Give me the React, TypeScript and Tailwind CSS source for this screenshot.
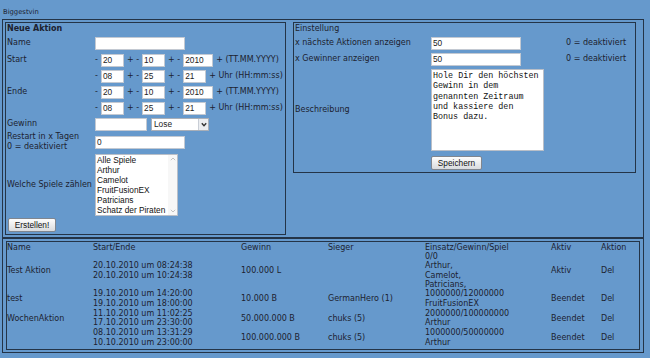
import React from "react";

const ARIAL = "font-['Liberation_Sans',Arial,sans-serif]";

function Inp({ cls, v }: { cls: string; v?: string }) {
  return (
    <div
      className={`${cls} h-[13px] shrink-0 bg-white border border-[#c3c9d2] ${ARIAL} text-[8.3px] leading-[11px] pl-[1px] text-[#222] overflow-hidden whitespace-nowrap`}
    >
      {v}
    </div>
  );
}

function Row({ label, children, cls = "" }: { label?: React.ReactNode; children?: React.ReactNode; cls?: string }) {
  return (
    <div className={`flex items-center h-4 ${cls}`}>
      <div className="w-[88px] shrink-0 whitespace-nowrap">{label}</div>
      {children}
    </div>
  );
}

function DateRow({ a, b, c, last, suffix }: { a: string; b: string; c: string; last: string; suffix: string }) {
  return (
    <div className="flex items-center gap-[3px] whitespace-pre">
      <span>-</span>
      <Inp cls="w-[23px]" v={a} />
      <span>+ -</span>
      <Inp cls="w-[23px]" v={b} />
      <span>+ -</span>
      <Inp cls={last} v={c} />
      <span>{suffix}</span>
    </div>
  );
}

function Btn({ cls, children }: { cls: string; children: React.ReactNode }) {
  return (
    <div
      className={`${cls} h-[14px] border border-[#80868f] rounded-[2px] bg-linear-to-b from-[#fdfdfd] to-[#d9dbde] ${ARIAL} text-[8.3px] leading-[12px] text-center text-[#111]`}
    >
      {children}
    </div>
  );
}

function LeftBox() {
  return (
    <div className="w-[281px] h-[213px] shrink-0 border border-[#243447] pl-[1px] pt-[1px]">
      <div className="font-bold">Neue Aktion</div>
      <Row label="Name" cls="mt-[1px]">
        <Inp cls="w-[90px]" />
      </Row>
      <Row label="Start" cls="mt-[1px]">
        <DateRow a="20" b="10" c="2010" last="w-[30px]" suffix="+ (TT.MM.YYYY)" />
      </Row>
      <Row>
        <DateRow a="08" b="25" c="21" last="w-[23px]" suffix="+ Uhr (HH:mm:ss)" />
      </Row>
      <Row label="Ende">
        <DateRow a="20" b="10" c="2010" last="w-[30px]" suffix="+ (TT.MM.YYYY)" />
      </Row>
      <Row>
        <DateRow a="08" b="25" c="21" last="w-[23px]" suffix="+ Uhr (HH:mm:ss)" />
      </Row>
      <Row label="Gewinn">
        <Inp cls="w-[52px]" />
        <div className={`ml-[4px] w-[58px] h-[13px] bg-white border border-[#a9afb8] flex ${ARIAL} text-[8.3px] leading-[11px] text-[#222]`}>
          <div className="flex-1 pl-[2px]">Lose</div>
          <div className="w-[10px] h-full bg-[#eceef1] border-l border-[#c9ced6] flex items-center justify-center">
            <svg width="6" height="5" viewBox="0 0 6 5">
              <path d="M0.8 1.2 L3 3.6 L5.2 1.2" fill="none" stroke="#333" strokeWidth="1.4" />
            </svg>
          </div>
        </div>
      </Row>
      <div className="flex items-center h-[20px]">
        <div className="w-[88px] shrink-0 leading-[10px]">
          <div>Restart in x Tagen</div>
          <div>0 = deaktiviert</div>
        </div>
        <Inp cls="w-[90px]" v="0" />
      </div>
      <div className="flex items-center pt-[2px]">
        <div className="w-[88px] shrink-0 whitespace-nowrap">Welche Spiele zählen</div>
        <div className="w-[83px] h-[62px] bg-white border border-[#b9bfc8] flex">
          <div className={`flex-1 pl-[1px] ${ARIAL} text-[8.3px] leading-[10px] text-[#111] whitespace-nowrap overflow-hidden`}>
            <div>Alle Spiele</div>
            <div>Arthur</div>
            <div>Camelot</div>
            <div>FruitFusionEX</div>
            <div>Patricians</div>
            <div>Schatz der Piraten</div>
          </div>
          <div className="w-[9px] h-full bg-[#f7f7f7] flex flex-col justify-between items-center py-[2px]">
            <svg width="6" height="4" viewBox="0 0 6 4">
              <path d="M0.8 3.2 L3 1 L5.2 3.2" fill="none" stroke="#c2c2c2" strokeWidth="1" />
            </svg>
            <svg width="6" height="4" viewBox="0 0 6 4">
              <path d="M0.8 0.8 L3 3 L5.2 0.8" fill="none" stroke="#c2c2c2" strokeWidth="1" />
            </svg>
          </div>
        </div>
      </div>
      <Btn cls="ml-[1px] mt-[2px] w-[48px]">Erstellen!</Btn>
    </div>
  );
}

function RightBox() {
  return (
    <div className="ml-[7px] w-[343px] h-[151px] shrink-0 border border-[#243447] pl-[1px] pt-[1px]">
      <div>Einstellung</div>
      <div className="flex items-center h-4 mt-[1px]">
        <div className="w-[136px] shrink-0">x nächste Aktionen anzeigen</div>
        <Inp cls="w-[90px]" v="50" />
        <div className="ml-[45px] whitespace-nowrap">0 = deaktiviert</div>
      </div>
      <div className="flex items-center h-4">
        <div className="w-[136px] shrink-0">x Gewinner anzeigen</div>
        <Inp cls="w-[90px]" v="50" />
        <div className="ml-[45px] whitespace-nowrap">0 = deaktiviert</div>
      </div>
      <div className="flex items-center mt-[2px]">
        <div className="w-[136px] shrink-0">Beschreibung</div>
        <div className="w-[113px] h-[82px] bg-white border border-[#b9bfc8] pl-[1px] pt-[1px] font-['Liberation_Mono','Courier_New',monospace] text-[8.4px] leading-[10.3px] text-[#111] whitespace-pre">
          {"Hole Dir den höchsten\nGewinn in dem\ngenannten Zeitraum\nund kassiere den\nBonus dazu."}
        </div>
      </div>
      <div className="pl-[136px] mt-[5px]">
        <Btn cls="w-[51px]">Speichern</Btn>
      </div>
    </div>
  );
}

type TRow = {
  name: string;
  dates: string[];
  gewinn: string;
  sieger: string;
  einsatz: string[];
  aktiv: string;
};

const rows: TRow[] = [
  {
    name: "Test Aktion",
    dates: ["20.10.2010 um 08:24:38", "20.10.2010 um 10:24:38"],
    gewinn: "100.000 L",
    sieger: "",
    einsatz: ["0/0", "Arthur,", "Camelot,", "Patricians,"],
    aktiv: "Aktiv",
  },
  {
    name: "test",
    dates: ["19.10.2010 um 14:20:00", "19.10.2010 um 18:00:00"],
    gewinn: "10.000 B",
    sieger: "GermanHero (1)",
    einsatz: ["1000000/12000000", "FruitFusionEX"],
    aktiv: "Beendet",
  },
  {
    name: "WochenAktion",
    dates: ["11.10.2010 um 11:02:25", "17.10.2010 um 23:30:00"],
    gewinn: "50.000.000 B",
    sieger: "chuks (5)",
    einsatz: ["2000000/100000000", "Arthur"],
    aktiv: "Beendet",
  },
  {
    name: "",
    dates: ["08.10.2010 um 13:31:29", "10.10.2010 um 23:00:00"],
    gewinn: "100.000.000 B",
    sieger: "chuks (5)",
    einsatz: ["1000000/50000000", "Arthur"],
    aktiv: "Beendet",
  },
];

const COLS = "grid grid-cols-[86px_148px_87px_97px_126px_50px_1fr] items-center";

function Table() {
  return (
    <div className="ml-[2px] w-[642px] h-[115px] border border-[#243447] px-[3px] py-[2px]">
      <div className="h-full border border-[#243447]">
        <div className={`${COLS} h-[10px] leading-[7px]`}>
          <div>Name</div>
          <div>Start/Ende</div>
          <div>Gewinn</div>
          <div>Sieger</div>
          <div>Einsatz/Gewinn/Spiel</div>
          <div>Aktiv</div>
          <div>Aktion</div>
        </div>
        {rows.map((r, i) => (
          <div
            key={i}
            className={`${COLS} ${i === 0 ? "h-[37px] leading-[9.25px]" : "h-[19.5px] leading-[9.5px]"} whitespace-nowrap`}
          >
            <div>{r.name}</div>
            <div>
              {r.dates.map((d) => (
                <div key={d} className={i === 0 ? "leading-[9.5px]" : ""}>{d}</div>
              ))}
            </div>
            <div>{r.gewinn}</div>
            <div>{r.sieger}</div>
            <div>
              {r.einsatz.map((e) => (
                <div key={e}>{e}</div>
              ))}
            </div>
            <div>{r.aktiv}</div>
            <div>Del</div>
          </div>
        ))}
      </div>
    </div>
  );
}

export default function App() {
  return (
    <div className="w-[650px] h-[358px] bg-[#6699cc] font-['DejaVu_Sans',sans-serif] text-[8px] leading-[10px] text-[#1c2230] overflow-hidden">
      <div className="h-[19px] pl-[3px] pt-[8px] text-[6.8px] leading-[8px]">Biggestvin</div>
      <div className="ml-[2px] w-[642px] h-[219px] border border-[#243447] p-[2px] flex items-start">
        <LeftBox />
        <RightBox />
      </div>
      <Table />
    </div>
  );
}
